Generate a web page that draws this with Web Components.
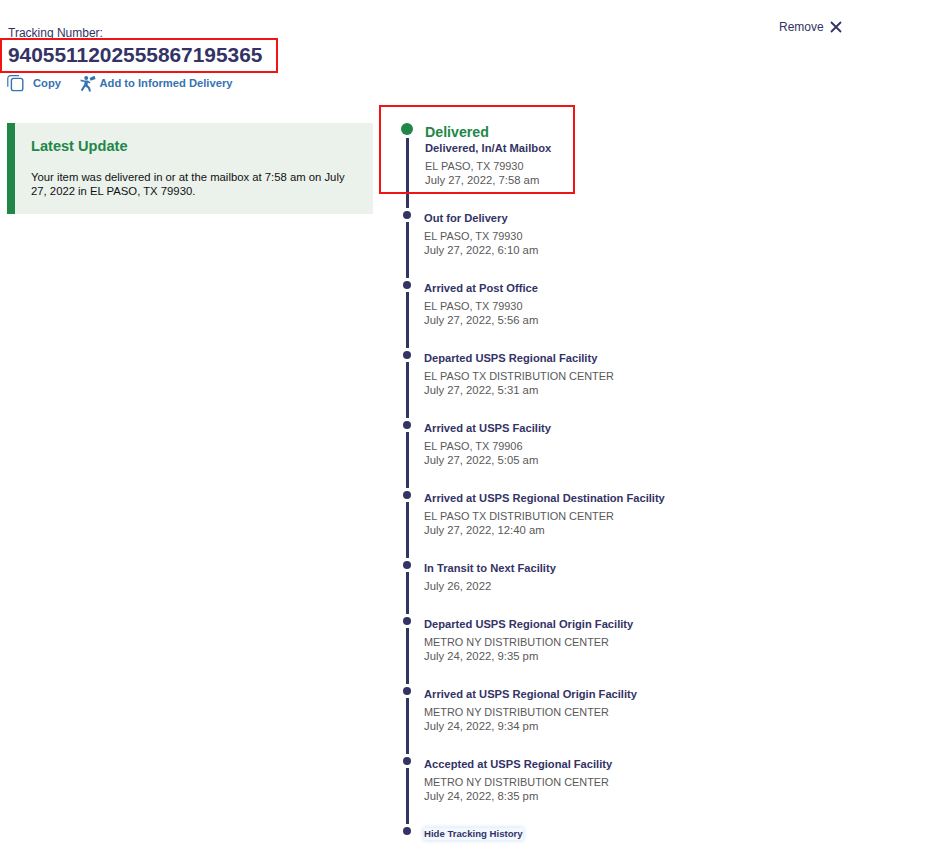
<!DOCTYPE html>
<html>
<head>
<meta charset="utf-8">
<title>Tracking</title>
<style>
  html, body { margin: 0; background: #fff; }
  body { font-family: "Liberation Sans", Arial, sans-serif; color: #333366; }
</style>
</head>
<body>
<tracking-page>
  <tracking-header slot="header" number="9405511202555867195365"></tracking-header>
  <latest-update slot="left" heading="Latest Update">Your item was delivered in or at the mailbox at 7:58 am on July 27, 2022 in EL PASO, TX 79930.</latest-update>
  <track-step slot="right" current title="Delivered" sub="Delivered, In/At Mailbox" place="EL PASO, TX 79930" when="July 27, 2022, 7:58 am"></track-step>
  <track-step slot="right" title="Out for Delivery" place="EL PASO, TX 79930" when="July 27, 2022, 6:10 am"></track-step>
  <track-step slot="right" title="Arrived at Post Office" place="EL PASO, TX 79930" when="July 27, 2022, 5:56 am"></track-step>
  <track-step slot="right" title="Departed USPS Regional Facility" place="EL PASO TX DISTRIBUTION CENTER" when="July 27, 2022, 5:31 am"></track-step>
  <track-step slot="right" title="Arrived at USPS Facility" place="EL PASO, TX 79906" when="July 27, 2022, 5:05 am"></track-step>
  <track-step slot="right" title="Arrived at USPS Regional Destination Facility" place="EL PASO TX DISTRIBUTION CENTER" when="July 27, 2022, 12:40 am"></track-step>
  <track-step slot="right" title="In Transit to Next Facility" when="July 26, 2022"></track-step>
  <track-step slot="right" title="Departed USPS Regional Origin Facility" place="METRO NY DISTRIBUTION CENTER" when="July 24, 2022, 9:35 pm"></track-step>
  <track-step slot="right" title="Arrived at USPS Regional Origin Facility" place="METRO NY DISTRIBUTION CENTER" when="July 24, 2022, 9:34 pm"></track-step>
  <track-step slot="right" title="Accepted at USPS Regional Facility" place="METRO NY DISTRIBUTION CENTER" when="July 24, 2022, 8:35 pm"></track-step>
  <track-toggle slot="right">Hide Tracking History</track-toggle>
</tracking-page>

<script>
class TrackingPage extends HTMLElement {
  constructor() {
    super();
    this.attachShadow({ mode: "open" });
    this.shadowRoot.innerHTML = `
      <style>
        :host { display: block; width: 944px; height: 868px; position: relative; font-family: "Liberation Sans", Arial, sans-serif; }
        .top { padding-top: 26px; height: 123px; box-sizing: border-box; }
        .columns { display: grid; grid-template-columns: 366px 1fr; column-gap: 26px; padding-left: 7px; }
        .left { align-self: start; }
        .right { display: flex; flex-direction: column; }
        /* red annotation boxes drawn over the page */
        .mark { position: absolute; border: 2px solid #f01414; box-sizing: border-box; pointer-events: none; }
        .mark.number { left: 0; top: 38px; width: 278px; height: 35px; }
        .mark.delivered { left: 379px; top: 105px; width: 196px; height: 89px; }
      </style>
      <div class="top"><slot name="header"></slot></div>
      <div class="columns">
        <div class="left"><slot name="left"></slot></div>
        <div class="right"><slot name="right"></slot></div>
      </div>
      <div class="mark number"></div>
      <div class="mark delivered"></div>
    `;
  }
}

class TrackingHeader extends HTMLElement {
  connectedCallback() {
    this.attachShadow({ mode: "open" });
    this.shadowRoot.innerHTML = `
      <style>
        :host { display: grid; grid-template-columns: 771px auto; padding-left: 8px; }
        .label { font-size: 12px; line-height: 14px; color: #333366; }
        .number { font-size: 20.9px; line-height: 28px; font-weight: 700; color: #333366; margin-top: 1px; }
        .actions { display: flex; align-items: center; margin-top: 4px; margin-left: -1px; height: 20px; font-size: 11.2px; font-weight: 700; color: #3573b1; }
        .actions svg { display: block; flex: none; }
        .copy { margin-left: 9px; }
        .run { margin-left: 19px; }
        .informed { margin-left: 3.5px; }
        .remove { display: flex; align-items: center; height: 14px; margin-top: -6px; font-size: 12px; color: #333366; }
        .remove svg { margin-left: 6px; }
      </style>
      <div>
        <div class="label">Tracking Number:</div>
        <div class="number">${this.getAttribute("number")}</div>
        <div class="actions">
          <svg width="17" height="17" viewBox="0 0 17 17" fill="none" stroke="#3573b1">
            <path d="M.8 11.8 V3.4 A2.8 2.8 0 0 1 3.6 .6 H12" stroke-width="1.2"/>
            <rect x="4.4" y="3.4" width="11.4" height="12.2" rx="2.2" stroke-width="1.4"/>
          </svg>
          <span class="copy">Copy</span>
          <svg class="run" width="16" height="17" viewBox="0 0 16 17" fill="#3573b1">
            <circle cx="6.2" cy="3" r="2"/>
            <path d="M9.6 3 L14.4 .8 L15.6 4 L10.6 5.8 Z"/>
            <path d="M.6 4.6 L4.4 5.6 L8 5.4 L10.6 7.4 L9.6 8.6 L7.8 7.6 L7.6 10 L10 12.4 L11 16.4 L9 16.6 L8 13.2 L5.4 11.4 L2.4 16.2 L.8 15 L4.2 9.4 L4.6 7 L.6 6.2 Z"/>
          </svg>
          <span class="informed">Add to Informed Delivery</span>
        </div>
      </div>
      <div class="remove">Remove
        <svg width="12" height="12" viewBox="0 0 12 12" fill="none" stroke="#333366" stroke-width="1.8"><path d="M1 1 L11 11 M11 1 L1 11"/></svg>
      </div>
    `;
  }
}

class LatestUpdate extends HTMLElement {
  connectedCallback() {
    this.attachShadow({ mode: "open" });
    this.shadowRoot.innerHTML = `
      <style>
        :host { display: block; box-sizing: border-box; height: 91px; background: #ebf2ec; border-left: 8px solid #218748; padding: 15px 24px 0 16px; }
        h3 { margin: 0; font-size: 14.6px; line-height: 16px; font-weight: 700; color: #218748; }
        p { margin: 16px 0 0; font-size: 11.3px; line-height: 14px; color: #111; }
      </style>
      <h3>${this.getAttribute("heading")}</h3>
      <p><slot></slot></p>
    `;
  }
}

class TrackStep extends HTMLElement {
  connectedCallback() {
    const sub = this.getAttribute("sub");
    const place = this.getAttribute("place");
    this.attachShadow({ mode: "open" });
    this.shadowRoot.innerHTML = `
      <style>
        :host { display: grid; grid-template-columns: 16px 1fr; column-gap: 9px; }
        :host([current]) { column-gap: 10px; }
        .marker { display: flex; flex-direction: column; align-items: center; }
        .dot { width: 8px; height: 8px; border-radius: 50%; background: #333366; flex: none; }
        :host([current]) .dot { width: 12px; height: 12px; background: #218748; }
        .line { width: 3px; flex: 1; background: #333366; margin: 3px 0; }
        .body { padding-bottom: 24px; }
        .title { font-size: 11.15px; line-height: 14px; font-weight: 700; color: #333366; margin-bottom: 4px; }
        :host([current]) .title { font-size: 14.2px; line-height: 18px; margin: 0; color: #218748; }
        .sub { font-size: 11.2px; line-height: 14px; font-weight: 700; color: #333366; margin-bottom: 4px; }
        .place, .when { line-height: 14px; color: #595959; }
        .place { font-size: 10.9px; }
        .when { font-size: 11.3px; }
      </style>
      <div class="marker"><span class="dot"></span><span class="line"></span></div>
      <div class="body">
        <div class="title">${this.getAttribute("title")}</div>
        ${sub ? `<div class="sub">${sub}</div>` : ""}
        ${place ? `<div class="place">${place}</div>` : ""}
        <div class="when">${this.getAttribute("when")}</div>
      </div>
    `;
  }
}

class TrackToggle extends HTMLElement {
  connectedCallback() {
    this.attachShadow({ mode: "open" });
    this.shadowRoot.innerHTML = `
      <style>
        :host { display: grid; grid-template-columns: 16px 1fr; column-gap: 9px; }
        .marker { display: flex; justify-content: center; }
        .dot { width: 8px; height: 8px; border-radius: 50%; background: #333366; }
        .link { justify-self: start; font-size: 9.6px; line-height: 12px; margin-top: 1px; font-weight: 700; color: #333366; background: #f3f8fe; box-shadow: 0 0 4px 1px #d6e7fa; }
      </style>
      <div class="marker"><span class="dot"></span></div>
      <div class="link"><slot></slot></div>
    `;
  }
}

customElements.define("tracking-page", TrackingPage);
customElements.define("tracking-header", TrackingHeader);
customElements.define("latest-update", LatestUpdate);
customElements.define("track-step", TrackStep);
customElements.define("track-toggle", TrackToggle);
</script>
</body>
</html>
